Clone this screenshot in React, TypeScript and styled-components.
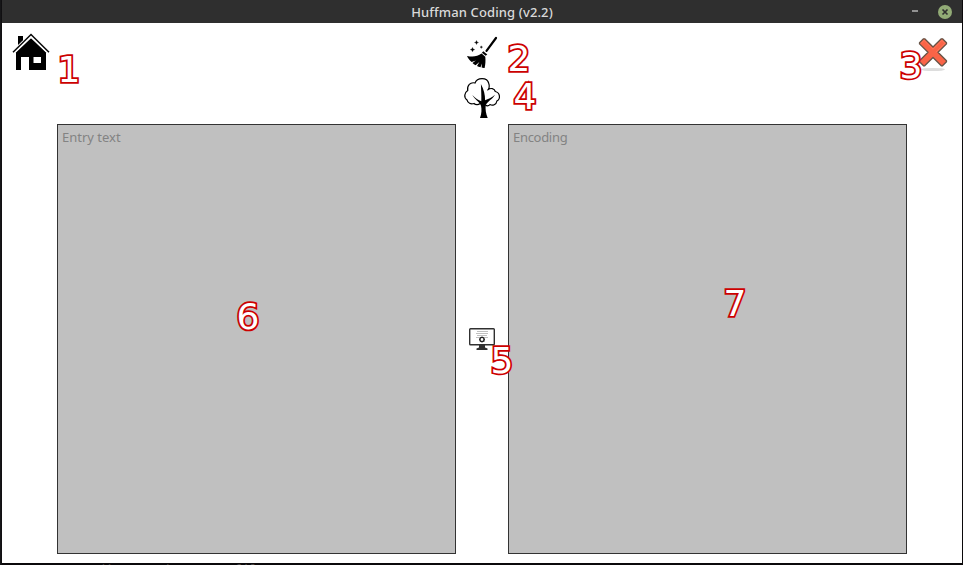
import React from 'react';
import styled, { createGlobalStyle } from 'styled-components';

const GlobalStyle = createGlobalStyle`
  * { box-sizing: border-box; }
  body { margin: 0; background: #0b090b; overflow: hidden; }
`;

const Desktop = styled.div`
  position: relative;
  width: 963px;
  height: 565px;
  padding: 0 1px 0 2px;
  overflow: hidden;
  background: linear-gradient(90deg, #161618 1px, #0b090b 2px);
  font-family: "Noto Sans", "Open Sans", sans-serif;
`;

const TitleBar = styled.header`
  display: grid;
  grid-template-columns: 1fr auto 1fr;
  align-items: center;
  height: 23px;
  background: #2f2f2f;
`;

const Title = styled.h1`
  grid-column: 2;
  margin: 0;
  color: #dadada;
  font: 500 13px/20px "Noto Sans", sans-serif;
  letter-spacing: 0.12px;
  white-space: nowrap;
`;

const WindowControls = styled.div`
  display: flex;
  justify-content: flex-end;
  align-items: center;
  gap: 20px;
  padding-right: 10px;
`;

const MinimizeButton = styled.button`
  width: 6px;
  height: 2px;
  padding: 0;
  border: 0;
  margin-bottom: 1px;
  background: #929292;
`;

const IconButton = styled.button<{ $w: number; $h: number }>`
  display: block;
  flex: none;
  width: ${(p) => p.$w}px;
  height: ${(p) => p.$h}px;
  padding: 0;
  border: 0;
  background: none;
  svg { display: block; width: 100%; height: 100%; }
`;

const Content = styled.main`
  height: 540px;
  padding: 10px 14px 0 10px;
  background: #fff;
`;

const Toolbar = styled.div`
  display: flex;
  justify-content: space-between;
  height: 91px;
`;

const ToolStack = styled.div`
  display: flex;
  flex-direction: column;
  align-items: center;
  gap: 7px;
  padding: 3px 4px 0 0;
`;

const CloseSlot = styled.div`
  padding-top: 4px;
`;

const Workspace = styled.div`
  display: grid;
  grid-template-columns: 399px 52px 399px;
  height: 430px;
  padding-left: 45px;
`;

const TextPanel = styled.textarea<{ $tracking: number }>`
  display: block;
  width: 399px;
  height: 430px;
  padding: 3px 4px;
  border: 1px solid #333;
  border-radius: 0;
  outline: 0;
  resize: none;
  background: #c0c0c0;
  color: #333;
  font: 13px/18px "Noto Sans", sans-serif;
  letter-spacing: ${(p) => p.$tracking}px;
  &::placeholder { color: #838383; opacity: 1; }
`;

const ConvertColumn = styled.div`
  display: flex;
  justify-content: center;
  align-items: center;
`;

const TerminalEdge = styled.footer`
  display: flex;
  gap: 45px;
  height: 2px;
  padding-left: 95px;
  overflow: hidden;
  color: #494341;
  font: 13.8px/14px "DejaVu Sans Mono", monospace;
`;

const Callout = styled.span<{ $x: number; $y: number }>`
  position: absolute;
  left: ${(p) => p.$x}px;
  top: ${(p) => p.$y}px;
  color: #fff;
  font: 36px/38px "DejaVu Sans", sans-serif;
  -webkit-text-stroke: 3.6px #cc0000;
  paint-order: stroke fill;
  pointer-events: none;
`;

const callouts = [
  { label: '1', x: 57.5, y: 51 },
  { label: '2', x: 507.5, y: 40 },
  { label: '3', x: 899.5, y: 47 },
  { label: '4', x: 513.5, y: 78 },
  { label: '5', x: 490.5, y: 342 },
  { label: '6', x: 236.5, y: 298 },
  { label: '7', x: 723.5, y: 285 },
];

const HomeIcon = () => (
  <svg viewBox="0 0 38 38">
    <path d="M6 3h5v5L6 13z" />
    <path d="M19 5 35 20H34V37H17V24H9V37H4V20H3z" />
    <path d="M21.5 24h7.5v6h-7.5z" fill="#fff" />
    <path d="M1 19.5 19 2.3 37 19.5" fill="none" stroke="#fff" strokeWidth="4" />
    <path d="M1 19.3 19 1.5 37 19.3" fill="none" stroke="#080808" strokeWidth="1.5" />
  </svg>
);

const BroomIcon = () => (
  <svg viewBox="0 0 32 34">
    <path d="M30 2 20.5 14.8" stroke="#000" strokeWidth="2.2" strokeLinecap="round" />
    <path d="m17.3 15.3 4 3.2-1.6 1.3-3.8-3z" />
    <path d="m15.6 17.6 3.7 3.2c.4 4.3.2 7.5-.7 11.2-1 .2-2 0-3-.4l.4-4-1.5 3.6c-1.4-.2-2.5-.7-3.5-1.3l2.4-3.8-3.8 3.2c-1.3-.5-2.3-1.3-3.1-2.2l3.3-2.6-4.1 1.5C3.6 24.3 2.1 22.5 1 20c5.5 1.2 10.4.8 14.6-2.4z" />
    <path d="m10.5 4.5.6 1.4 1.4.6-1.4.6-.6 1.4-.6-1.4-1.4-.6 1.4-.6zM6.5 11.4l.7 1.5 1.5.7-1.5.7-.7 1.5-.7-1.5-1.5-.7 1.5-.7zM15.3 9.8l.4.9.9.4-.9.4-.4.9-.4-.9-.9-.4.9-.4z" stroke="#000" strokeWidth=".3" />
  </svg>
);

const TreeIcon = () => (
  <svg viewBox="0 0 38 42">
    <path d="M17 26.5c-1.6 1.7-4.6 1.5-6 0-3.2.8-6.3-.1-7-3.6-3.5-2.5-2.6-7.1.7-9.3C3.8 8.5 7.4 4.8 12 6c2-5.7 12.2-6.2 13.8.5 1 3 .2 5.3-1.3 6.8m.7-.7c2.5-2 6.2-1.2 7.1 1.9 4.8 1.2 5.6 7.3 1.6 9.5-.5 3.6-4.3 5.1-6.9 3.6-1.6 1.5-3.7 1.1-4.8.1" fill="none" stroke="#000" strokeWidth="1.2" />
    <path d="M17 41c1.7-4.4 1.8-9 1-12.3-1.7-4.2-5.7-5.4-8.7-10.7 3.2 3.6 6 4.8 9 6.3.2-6.1-.2-11.7-.4-17.3 3.2 6 4.2 11 4.2 16.2 3-1.3 6.4-2.5 9.9-5.5-2.4 4.5-7.2 6.3-9.3 10.3-.5 4.3.2 8.6 2 13z" />
  </svg>
);

const MonitorIcon = () => (
  <svg viewBox="0 0 26 22">
    <rect x=".7" y=".7" width="24.6" height="16.1" rx=".8" fill="#fff" stroke="#303030" strokeWidth="1.4" />
    <path d="M8 3.5h11M7 5.5h12M8 7.5h10M7 9.5h3M16 9.5h3" stroke="#b0b0b0" strokeWidth=".8" />
    <circle cx="13" cy="11.5" r="2.1" fill="#fff" stroke="#202020" strokeWidth="1.4" />
    <path d="M13 8.6v1M13 13.5v1M10.1 11.5h1M14.9 11.5h1M10.9 9.4l.7.7m2.9 2.9.7.7m0-4.3-.7.7m-2.9 2.9-.7.7" stroke="#202020" strokeWidth=".8" />
    <path d="M10 17h6v2.5l2.5 1V22h-11v-1.5l2.5-1z" fill="#303030" />
  </svg>
);

const DeleteIcon = () => (
  <svg viewBox="0 0 30 35">
    <ellipse cx="15" cy="32.5" rx="12" ry="1.6" fill="#ddd" />
    <path d="M5.5 1.8h1.2L15 10l8.3-8.2h1.2l4 4v1.1L20 15.3l8.5 8.4v1.1l-4 4h-1.2L15 20.5l-8.3 8.3H5.5l-4-4v-1.1l8.5-8.4-8.5-8.4V5.8z" fill="#fa6447" stroke="#665346" strokeWidth="1.3" strokeLinejoin="round" />
    <path d="m3.1 6.3 3-2.9 8.9 8.8 8.9-8.8 3 2.9-9 9" fill="none" stroke="#ff795c" strokeWidth="1" />
  </svg>
);

const CloseIcon = () => (
  <svg viewBox="0 0 14 14">
    <circle cx="7" cy="7" r="7" fill="#92ab76" />
    <path d="m4.5 4.5 5 5m0-5-5 5" stroke="#303030" strokeWidth="1.7" />
  </svg>
);

export default function App() {
  return (
    <>
      <GlobalStyle />
      <Desktop>
        <TitleBar>
          <Title>Huffman Coding (v2.2)</Title>
          <WindowControls>
            <MinimizeButton aria-label="Minimize" />
            <IconButton $w={14} $h={14} aria-label="Close window"><CloseIcon /></IconButton>
          </WindowControls>
        </TitleBar>
        <Content>
          <Toolbar>
            <IconButton $w={38} $h={38} aria-label="Home"><HomeIcon /></IconButton>
            <ToolStack>
              <IconButton $w={32} $h={34} aria-label="Clear"><BroomIcon /></IconButton>
              <IconButton $w={38} $h={42} aria-label="Tree"><TreeIcon /></IconButton>
            </ToolStack>
            <CloseSlot>
              <IconButton $w={30} $h={35} aria-label="Exit"><DeleteIcon /></IconButton>
            </CloseSlot>
          </Toolbar>
          <Workspace>
            <TextPanel placeholder="Entry text" $tracking={0} />
            <ConvertColumn>
              <IconButton $w={26} $h={22} aria-label="Encode"><MonitorIcon /></IconButton>
            </ConvertColumn>
            <TextPanel placeholder="Encoding" $tracking={-0.3} />
          </Workspace>
        </Content>
        <TerminalEdge><span>directories</span><span>files</span></TerminalEdge>
        {callouts.map((c) => (
          <Callout key={c.label} $x={c.x} $y={c.y}>{c.label}</Callout>
        ))}
      </Desktop>
    </>
  );
}
